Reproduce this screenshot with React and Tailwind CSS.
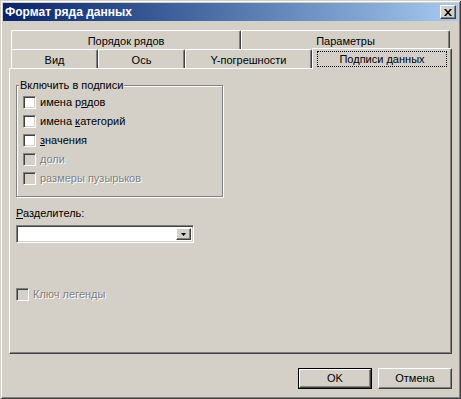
import React from "react";

const raised =
  "border border-t-white border-l-white border-r-[#404040] border-b-[#404040] shadow-[inset_-1px_-1px_0_#808080]";

function Check({ disabled }) {
  return (
    <span
      className={`block w-[13px] h-[13px] shrink-0 border border-t-[#808080] border-l-[#808080] border-r-white border-b-white shadow-[inset_1px_1px_0_#404040,inset_-1px_-1px_0_#d4d0c8] ${
        disabled ? "bg-[#d4d0c8]" : "bg-white"
      }`}
    />
  );
}

function CheckRow({ disabled, children }) {
  return (
    <div className="flex items-center h-[19px] gap-[4px]">
      <Check disabled={disabled} />
      <span
        className={
          disabled
            ? "text-[#808080] [text-shadow:1px_1px_0_#ffffff]"
            : "text-black"
        }
      >
        {children}
      </span>
    </div>
  );
}

function Tab({ w, children }) {
  return (
    <div
      className={`h-full ${w} flex justify-center pt-[4px] border-t border-l border-t-white border-l-white border-r border-r-[#404040] shadow-[inset_-1px_0_0_#808080] rounded-tl-[2px] rounded-tr-[2px]`}
    >
      {children}
    </div>
  );
}

export default function App() {
  return (
    <div className="w-[461px] h-[399px] flex flex-col bg-[#d4d0c8] p-[3px] shadow-[inset_1px_1px_0_#d4d0c8,inset_-1px_-1px_0_#404040,inset_2px_2px_0_#ffffff,inset_-2px_-2px_0_#808080] font-['Liberation_Sans',Arial,sans-serif] text-[11px] leading-[13px] text-black">
      {/* Title bar */}
      <div className="h-[18px] flex items-center bg-linear-to-r from-[#0a246a] to-[#a6caf0] pl-[2px] pr-[2px]">
        <span className="font-bold text-white text-[12px] leading-none">
          Формат ряда данных
        </span>
        <div
          className={`ml-auto w-[16px] h-[14px] bg-[#d4d0c8] flex items-center justify-center ${raised}`}
        >
          <svg width="8" height="7" viewBox="0 0 8 7">
            <path
              d="M0 0h2l2 2.5L6 0h2L5 3.5 8 7H6L4 4.5 2 7H0l3-3.5z"
              fill="#000"
            />
          </svg>
        </div>
      </div>

      {/* Tabs */}
      <div className="mt-[9px] mx-[6px] flex flex-col">
        <div className="flex h-[19px] pl-[2px]">
          <Tab w="w-[230px]">Порядок рядов</Tab>
          <Tab w="w-[209px]">Параметры</Tab>
        </div>
        <div className="flex h-[19px] pl-[2px] items-end">
          <Tab w="w-[87px]">Вид</Tab>
          <Tab w="w-[87px]">Ось</Tab>
          <Tab w="w-[127px]">Y-погрешности</Tab>
          <div className="relative z-10 w-[140px] h-[21px] mb-[-1px] shrink-0 bg-[#d4d0c8] border-t border-l border-t-white border-l-white border-r border-r-[#404040] shadow-[inset_-1px_0_0_#808080] rounded-tl-[2px] rounded-tr-[2px] pt-[2px] px-[4px]">
            <div className="h-[16px] border border-dotted border-black flex items-center justify-center">
              Подписи данных
            </div>
          </div>
        </div>

        {/* Panel */}
        <div className="h-[286px] flex flex-col border-t border-l border-t-white border-l-white border-r border-b border-r-[#404040] border-b-[#404040] shadow-[inset_-1px_-1px_0_#808080] pl-[6px]">
          <div className="relative mt-[16px] w-[207px] h-[112px] border border-[#808080] shadow-[inset_1px_1px_0_#ffffff,1px_1px_0_#ffffff] pt-[7px] pl-[6px]">
            <span className="absolute top-[-7px] left-[2px] px-[1px] bg-[#d4d0c8]">
              Включить в подписи
            </span>
            <CheckRow>
              имена р<u>я</u>дов
            </CheckRow>
            <CheckRow>
              имена <u>к</u>атегорий
            </CheckRow>
            <CheckRow>
              <u>з</u>начения
            </CheckRow>
            <CheckRow disabled>доли</CheckRow>
            <CheckRow disabled>размеры пузырьков</CheckRow>
          </div>

          <div className="mt-[10px]">
            <u>Р</u>азделитель:
          </div>
          <div className="mt-[5px] w-[178px] h-[18px] bg-white border border-t-[#808080] border-l-[#808080] border-r-white border-b-white shadow-[inset_1px_1px_0_#404040,inset_-1px_-1px_0_#d4d0c8] flex justify-end p-[2px]">
            <div
              className={`w-[15px] h-full bg-[#d4d0c8] flex items-center justify-center ${raised}`}
            >
              <svg width="5" height="3" viewBox="0 0 5 3">
                <path d="M0 0h5L2.5 3z" fill="#000" />
              </svg>
            </div>
          </div>

          <div className="mt-[45px] flex items-center gap-[4px]">
            <Check disabled />
            <span className="text-[#808080] [text-shadow:1px_1px_0_#ffffff]">
              Ключ легенды
            </span>
          </div>
        </div>
      </div>

      {/* Buttons */}
      <div className="mt-[14px] mr-[6px] flex justify-end gap-[6px]">
        <div className="w-[74px] h-[21px] border border-black bg-[#d4d0c8]">
          <div
            className={`w-full h-full flex items-center justify-center ${raised}`}
          >
            OK
          </div>
        </div>
        <div
          className={`w-[74px] h-[21px] bg-[#d4d0c8] flex items-center justify-center ${raised}`}
        >
          Отмена
        </div>
      </div>
    </div>
  );
}
